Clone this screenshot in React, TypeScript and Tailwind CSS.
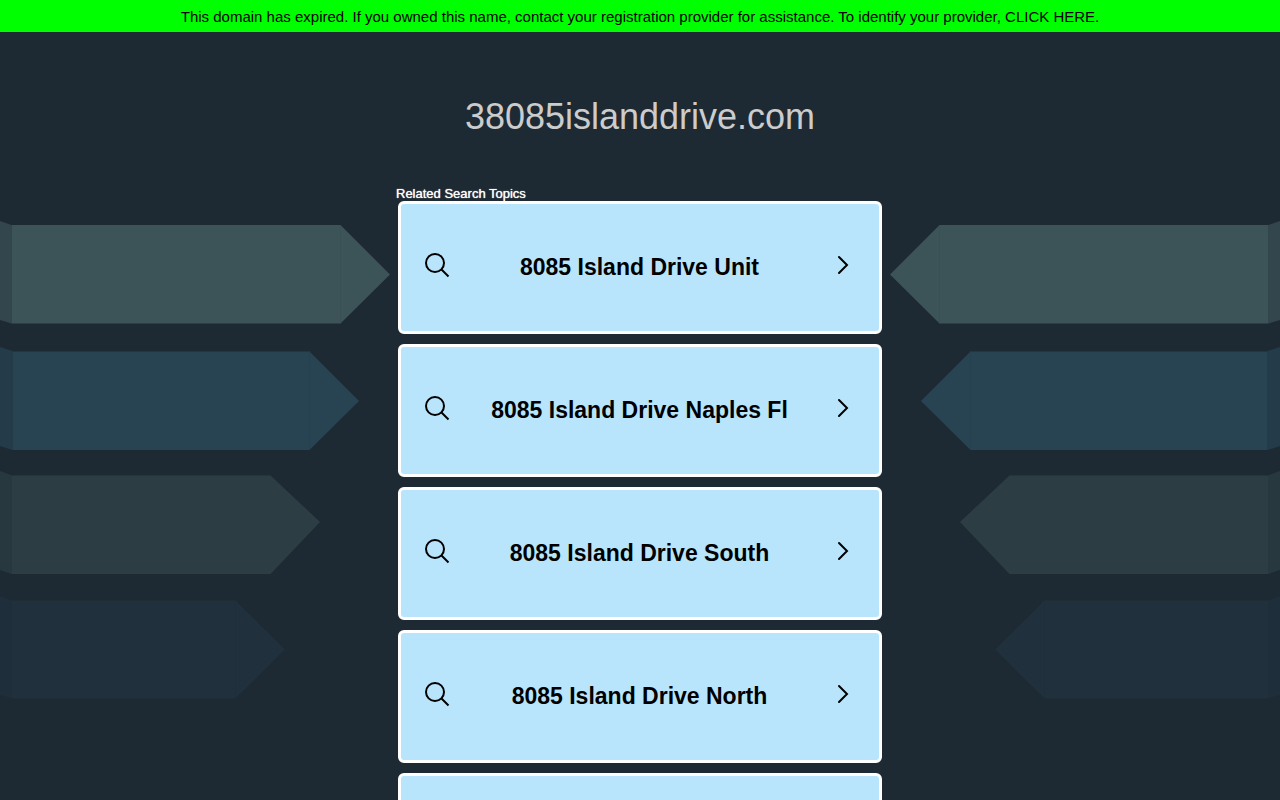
const topics = [
  "8085 Island Drive Unit",
  "8085 Island Drive Naples Fl",
  "8085 Island Drive South",
  "8085 Island Drive North",
  "8085 Island Drive Florida",
];

/** Arrows — decorative ribbons pointing at the topic list from the page edge. */
function Arrows({ className }: { className: string }) {
  return (
    <svg viewBox="0 0 400 500" width="400" height="500" className={className} aria-hidden="true">
      <path d="M0 21 11.500 25V123.500L0 120Z" fill="#33464e" />
      <path d="M11.500 25H340.500L390 74.500 340.500 123.500H11.500Z" fill="#3c5357" />
      <path d="M340.500 25V123.500" stroke="#3a5054" />
      <path d="M0 147 12.500 151V250L0 246Z" fill="#243c4a" />
      <path d="M12.500 151.500H309.500L359 201 309.500 250H12.500Z" fill="#284452" />
      <path d="M309.500 151.500V250" stroke="#26414e" />
      <path d="M0 271 12 275.500V374L0 370Z" fill="#28383f" />
      <path d="M12 275.500H270.500L320 322 270.500 374H12Z" fill="#2c3e43" />
      <path d="M0 396 12 400.500V498.500L0 495Z" fill="#1e2e3a" />
      <path d="M12 400.500H235.500L285 449.500 235.500 498.500H12Z" fill="#20303c" />
      <path d="M235.500 401V498" stroke="#1f2f3a" />
    </svg>
  );
}

function SearchIcon() {
  return (
    <svg width="26" height="26" viewBox="0 0 26 26" fill="none" stroke="#000" strokeWidth="2" aria-hidden="true">
      <circle cx="11" cy="11" r="9" />
      <path d="M17.500 17.500 24.500 24.500" />
    </svg>
  );
}

function ChevronIcon() {
  return (
    <svg
      width="12"
      height="20"
      viewBox="0 0 12 20"
      fill="none"
      stroke="#000"
      strokeWidth="2"
      strokeLinecap="round"
      className="ml-2"
      aria-hidden="true"
    >
      <path d="M2 2 10 10 2 18" />
    </svg>
  );
}

function TopicLink({ label }: { label: string }) {
  return (
    <a
      href="#"
      className="flex h-[133px] items-center rounded-md border-3 border-white bg-[#b8e5fc] pr-[30px] pb-1.5 pl-[23px] text-black"
    >
      <SearchIcon />
      <span className="flex-1 pt-1 text-center text-[23px] leading-8 font-bold">{label}</span>
      <ChevronIcon />
    </a>
  );
}

export default function App() {
  return (
    <div className="relative min-h-screen overflow-hidden bg-[#1e2a33] font-['Liberation_Sans',Arial,sans-serif]">
      <Arrows className="absolute top-[200px] left-0" />
      <Arrows className="absolute top-[200px] right-0 -scale-x-100" />
      <header className="relative bg-[#00ff00] px-4 pt-[5px] pb-[3px] text-center text-[15px] leading-6 text-black">
        This domain has expired. If you owned this name, contact your registration provider for assistance. To
        identify your provider, <a href="#">CLICK HERE</a>.
      </header>
      <main className="relative mx-auto max-w-[484px] pt-16 pb-10">
        <h1 className="text-center text-4xl leading-[42px] text-[#cccccc]">38085islanddrive.com</h1>
        <h2 className="-ml-0.5 pt-12 text-[13px] leading-[15px] text-white [text-shadow:0_0_1px_#fff]">
          Related Search Topics
        </h2>
        <nav className="flex flex-col gap-2.5">
          {topics.map((topic) => (
            <TopicLink key={topic} label={topic} />
          ))}
        </nav>
      </main>
    </div>
  );
}
